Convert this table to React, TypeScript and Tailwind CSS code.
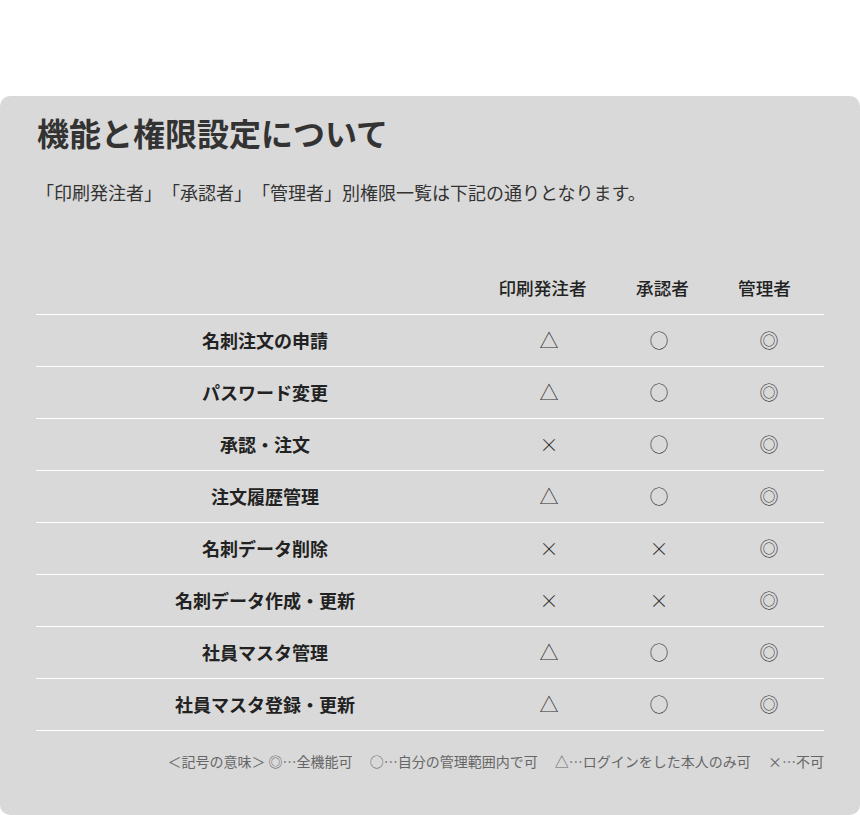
import React from "react";

const rows: [string, string, string, string][] = [
  ["名刺注文の申請", "△", "○", "◎"],
  ["パスワード変更", "△", "○", "◎"],
  ["承認・注文", "×", "○", "◎"],
  ["注文履歴管理", "△", "○", "◎"],
  ["名刺データ削除", "×", "×", "◎"],
  ["名刺データ作成・更新", "×", "×", "◎"],
  ["社員マスタ管理", "△", "○", "◎"],
  ["社員マスタ登録・更新", "△", "○", "◎"],
];

export default function App() {
  return (
    <div
      className="w-[860px] h-[815px] bg-white pt-[96px] overflow-hidden [text-spacing-trim:space-all]"
      style={{ fontFamily: '"Noto Sans CJK JP", "Noto Sans", sans-serif' }}
    >
      <div className="h-[719px] bg-[#d9d9d9] rounded-[10px] px-[36px] pt-[20px] text-[#222]">
        <h1 className="text-[32px] font-bold leading-[32px] text-[#333] ml-[1px]">
          機能と権限設定について
        </h1>
        <p className="text-[18px] leading-[18px] text-[#333] mt-[35px]">
          「印刷発注者」「承認者」「管理者」別権限一覧は下記の通りとなります。
        </p>
        <div className="mt-[61px] w-[788px]">
          <div className="grid grid-cols-[458px_110px_110px_110px] h-[53px] items-center border-b border-white text-[17.6px] font-medium">
            <div />
            <div className="text-center pr-[13px]">印刷発注者</div>
            <div className="text-center pl-[7px]">承認者</div>
            <div className="text-center pr-[9px]">管理者</div>
          </div>
          {rows.map((r) => (
            <div
              key={r[0]}
              className="grid grid-cols-[458px_110px_110px_110px] h-[52px] items-center border-b border-white"
            >
              <div className="text-center text-[18px] font-semibold">{r[0]}</div>
              <div className="text-center text-[19px] font-light text-[#333]">{r[1]}</div>
              <div className="text-center text-[19px] font-light text-[#333]">{r[2]}</div>
              <div className="text-center text-[19px] font-light text-[#333]">{r[3]}</div>
            </div>
          ))}
          <div className="text-right text-[14px] text-[#666] mt-[20px] whitespace-pre">
            {"＜記号の意味＞ ◎…全機能可　 ○…自分の管理範囲内で可　 △…ログインをした本人のみ可　 ×…不可"}
          </div>
        </div>
      </div>
    </div>
  );
}
